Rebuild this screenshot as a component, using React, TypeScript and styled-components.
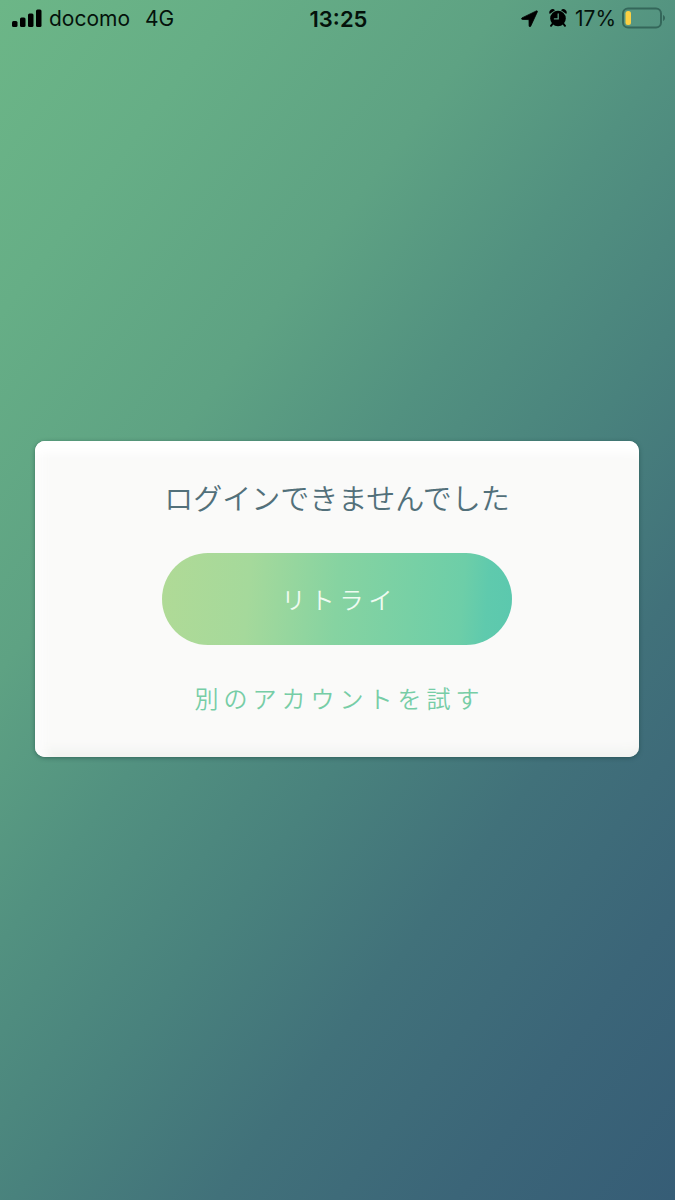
import React from "react";
import styled, { createGlobalStyle } from "styled-components";

const GlobalStyle = createGlobalStyle`
  *, *::before, *::after { box-sizing: border-box; }
  body { margin: 0; }
`;

const Screen = styled.div`
  display: flex;
  flex-direction: column;
  min-height: 100vh;
  background: linear-gradient(
    127deg,
    #6cb687 0%,
    #66ae86 15%,
    #5ea283 32%,
    #529180 45%,
    #49827d 58%,
    #41717a 71%,
    #3b6578 86%,
    #365d76 100%
  );
  font-family: "Noto Sans CJK JP", sans-serif;
`;

const StatusBar = styled.header`
  display: grid;
  grid-template-columns: 1fr auto 1fr;
  align-items: center;
  height: 36px;
  padding: 0 10px 0 12px;
  color: #04120b;
  font-family: Inter, sans-serif;
  font-size: 21px;
  line-height: 24px;
`;

const StatusGroup = styled.div<{ $end?: boolean }>`
  display: flex;
  align-items: center;
  justify-content: ${(p) => (p.$end ? "flex-end" : "flex-start")};
  gap: ${(p) => (p.$end ? "6px" : "7px")};
`;

const StatusText = styled.span`
  padding-top: 2px;
`;

const Network = styled(StatusText)`
  margin-left: 8px;
`;

const Clock = styled.time`
  padding-top: 2px;
  font-size: 22px;
  font-weight: 600;
`;

const StatusIcons = styled.div`
  display: flex;
  align-items: center;
  gap: 11px;
  margin-right: 2px;
`;

const Icon = styled.svg`
  display: block;
  flex: none;
`;

const Main = styled.main`
  display: flex;
  flex: 1;
  align-items: center;
  justify-content: center;
  padding: 0 36px 38px 35px;
`;

const Dialog = styled.section`
  display: flex;
  flex-direction: column;
  align-items: center;
  width: 100%;
  padding: 34px 24px;
  border-radius: 10px;
  background: #fafaf9;
  box-shadow:
    0 1px 4px rgba(20, 60, 55, 0.5),
    inset 0 20px 10px -8px #ffffff,
    inset 18px 0 8px -8px #fcfcfc,
    inset 0 -14px 12px -8px #f1f2ef;
`;

const Title = styled.h1`
  margin: 0;
  color: #52707a;
  font-size: 29px;
  font-weight: 350;
  line-height: 44px;
`;

const RetryButton = styled.button`
  width: 63%;
  height: 92px;
  margin-top: 34px;
  padding: 0 0 0 5px;
  border: 0;
  border-radius: 46px;
  background: linear-gradient(95deg, #b0da96 0%, #a5d99b 25%, #86d3a1 50%, #6dcea8 85%, #5fcaad 92%, #5bc8ae 100%);
  color: #effbf1;
  font-family: inherit;
  font-size: 24px;
  font-weight: 350;
  line-height: 40px;
  letter-spacing: 5px;
`;

const AccountLink = styled.a`
  margin-top: 28px;
  padding-left: 5px;
  color: #76cda6;
  font-size: 24px;
  font-weight: 350;
  line-height: 50px;
  letter-spacing: 5px;
  text-decoration: none;
`;

function SignalIcon() {
  return (
    <Icon width="30" height="20" viewBox="0 0 30 20" fill="#000" aria-label="signal">
      <rect x="0" y="13" width="5.5" height="6" rx="1.5" />
      <rect x="8" y="9.5" width="5.5" height="9.5" rx="1.5" />
      <rect x="16" y="5.5" width="5.5" height="13.5" rx="1.5" />
      <rect x="24" y="1.500" width="5.5" height="17.5" rx="1.5" />
    </Icon>
  );
}

function LocationIcon() {
  return (
    <Icon width="17" height="18" viewBox="0 0 17 18" fill="#000" stroke="#000" strokeWidth="0.8" strokeLinejoin="round" aria-label="location">
      <path d="M15.4 1.900 1 8.900c-.8.5-.5 1.500.4 1.500l6.600.2.1 6.300c0 .9 1.200 1.100 1.600.3L16.300 2.900c.3-.7-.2-1.300-.9-1Z" />
    </Icon>
  );
}

function AlarmIcon() {
  return (
    <Icon width="18" height="20" viewBox="0 0 18 20" fill="#000" aria-label="alarm">
      <path d="M.7 6A3.300 3.300 0 0 1 6 2.200ZM17.300 6A3.300 3.300 0 0 0 12 2.200Z" />
      <circle cx="9" cy="10.5" r="7.8" />
      <path d="m3.800 15.500-1.800 2.300M14.200 15.500l1.800 2.300" stroke="#000" strokeWidth="2" strokeLinecap="round" />
      <path d="M9.200 6v4.900H5.400" fill="none" stroke="#5a9a82" strokeWidth="1.3" strokeLinecap="round" />
    </Icon>
  );
}

function BatteryIcon() {
  return (
    <Icon width="43" height="22" viewBox="0 0 43 22" aria-label="battery">
      <rect x="1" y="1.5" width="38" height="19" rx="5" fill="none" stroke="#34675a" strokeWidth="2" />
      <path d="M41 8v6c1.300-.6 2-1.700 2-3s-.7-2.400-2-3Z" fill="#34675a" />
      <rect x="3.5" y="4" width="5.5" height="14" rx="2.5" fill="#fbd043" />
    </Icon>
  );
}

export default function App() {
  return (
    <>
      <GlobalStyle />
      <Screen lang="ja">
        <StatusBar>
          <StatusGroup>
            <SignalIcon />
            <StatusText>docomo</StatusText>
            <Network>4G</Network>
          </StatusGroup>
          <Clock>13:25</Clock>
          <StatusGroup $end>
            <StatusIcons>
              <LocationIcon />
              <AlarmIcon />
            </StatusIcons>
            <StatusText>17%</StatusText>
            <BatteryIcon />
          </StatusGroup>
        </StatusBar>
        <Main>
          <Dialog aria-labelledby="dialog-title">
            <Title id="dialog-title">ログインできませんでした</Title>
            <RetryButton type="button">リトライ</RetryButton>
            <AccountLink href="#account">別のアカウントを試す</AccountLink>
          </Dialog>
        </Main>
      </Screen>
    </>
  );
}
